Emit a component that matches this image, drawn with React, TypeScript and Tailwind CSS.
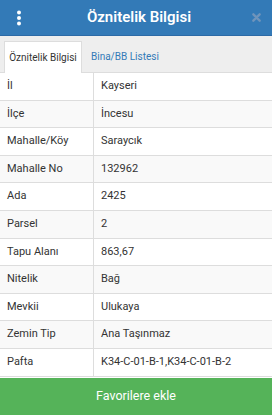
const rows: [string, string][] = [
  ["İl", "Kayseri"],
  ["İlçe", "İncesu"],
  ["Mahalle/Köy", "Saraycık"],
  ["Mahalle No", "132962"],
  ["Ada", "2425"],
  ["Parsel", "2"],
  ["Tapu Alanı", "863,67"],
  ["Nitelik", "Bağ"],
  ["Mevkii", "Ulukaya"],
  ["Zemin Tip", "Ana Taşınmaz"],
  ["Pafta", "K34-C-01-B-1,K34-C-01-B-2"],
]

export default function App() {
  return (
    <div className="flex h-[415px] w-[272px] flex-col overflow-hidden bg-white font-['Roboto',sans-serif] text-[#333]">
      <div className="flex h-[36px] shrink-0 items-center border-b border-[#2c6aa6] bg-[#337ab7] pl-[16px] pr-[11px]">
        <svg width="6" height="16" viewBox="0 0 6 16" className="shrink-0">
          <circle cx="3" cy="2.5" r="2" fill="#fff" />
          <circle cx="3" cy="8" r="2" fill="#fff" />
          <circle cx="3" cy="13.5" r="2" fill="#fff" />
        </svg>
        <h1 className="flex-1 pl-[4px] text-center text-[15px] font-semibold text-white">Öznitelik Bilgisi</h1>
        <svg width="9" height="9" viewBox="0 0 10 10" className="shrink-0">
          <path d="M1.5 1.5 8.5 8.5M8.5 1.5 1.5 8.5" stroke="#6f94bb" strokeWidth="2.6" strokeLinecap="round" />
        </svg>
      </div>

      <div className="flex h-[37px] shrink-0 items-end border-b border-[#ddd] bg-[#eee] pl-[4px]">
        <div className="-mb-px flex h-[32px] w-[78px] items-center justify-center border border-b-0 border-[#ddd] bg-white text-[10px]">
          Öznitelik Bilgisi
        </div>
        <div className="flex h-[32px] items-center px-[9px] text-[10px] text-[#337ab7]">Bina/BB Listesi</div>
      </div>

      <div className="flex-1">
        {rows.map(([k, v], i) => (
          <div
            key={k}
            className={`flex h-[27.6px] border-b border-[#ddd] text-[11px] ${i % 2 ? "bg-[#f9f9f9]" : "bg-white"}`}
          >
            <div className="flex w-[94px] items-center border-r border-[#ddd] pl-[7px]">{k}</div>
            <div className="flex flex-1 items-center pl-[7px]">{v}</div>
          </div>
        ))}
      </div>

      <button className="h-[37px] shrink-0 bg-[#55b359] text-[12.5px] text-white">Favorilere ekle</button>
    </div>
  )
}
